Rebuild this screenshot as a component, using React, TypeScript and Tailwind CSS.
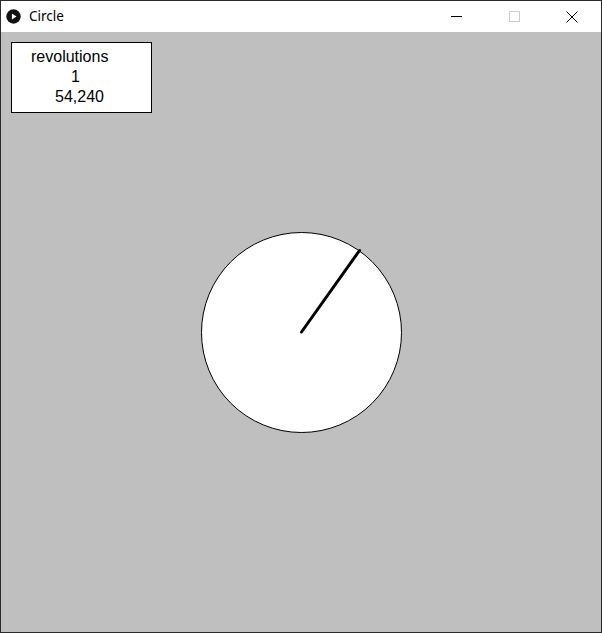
import React from "react";

export default function App() {
  return (
    <div className="w-[602px] h-[633px] border border-[#2b2b2b] bg-white flex flex-col overflow-hidden">
      {/* Title bar */}
      <div className="h-[31px] flex items-center bg-white shrink-0">
        <div className="pl-[5px] pr-[8px] h-full flex items-center">
          <svg width="15" height="15" viewBox="0 0 15 15">
            <circle cx="7.5" cy="7.5" r="7.2" fill="#111" />
            <path d="M5.9 4.5 L10.5 7.5 L5.9 10.5 Z" fill="#fff" />
          </svg>
        </div>
        <span
          className="text-[13.5px] text-black leading-none"
          style={{ fontFamily: '"Noto Sans", "Open Sans", sans-serif' }}
        >
          Circle
        </span>
        <div className="ml-auto flex h-full">
          <div className="w-[58px] h-full flex items-center justify-center">
            <div className="w-[11px] h-px bg-black" />
          </div>
          <div className="w-[58px] h-full flex items-center justify-center">
            <div className="w-[11px] h-[11px] border border-[#cccccc]" />
          </div>
          <div className="w-[58px] h-full flex items-center justify-center">
            <svg width="12" height="12" viewBox="0 0 12 12">
              <path d="M0.5 0.5 L11.5 11.5 M11.5 0.5 L0.5 11.5" stroke="#000" strokeWidth="1" />
            </svg>
          </div>
        </div>
      </div>
      {/* Canvas */}
      <div className="relative w-[600px] h-[600px] bg-[#bfbfbf] p-[10px]">
        <svg className="absolute inset-0" width="600" height="600" viewBox="0 0 600 600">
          <circle cx="300.5" cy="300.5" r="100" fill="#fff" stroke="#000" strokeWidth="1" />
          <line x1="300.5" y1="300" x2="358.5" y2="218.5" stroke="#000" strokeWidth="3" strokeLinecap="round" />
        </svg>
        <div
          className="relative w-[141px] h-[71px] bg-white border border-black flex flex-col pt-[4px] text-[16px] leading-[20px] text-black"
          style={{ fontFamily: '"Liberation Sans", Arial, sans-serif' }}
        >
          <span className="ml-[19px]">revolutions</span>
          <span className="ml-[59px]">1</span>
          <span className="ml-[43px]">54,240</span>
        </div>
      </div>
    </div>
  );
}
